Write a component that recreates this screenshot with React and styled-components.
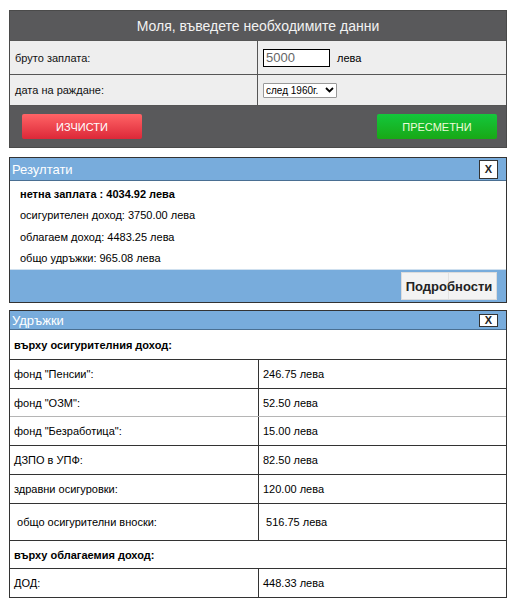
import React from 'react';
import styled, { createGlobalStyle } from 'styled-components';

const GlobalStyle = createGlobalStyle`
  body {
    margin: 0;
    background: #ffffff;
    font-family: "Liberation Sans", Arial, sans-serif;
    color: #000;
  }
`;

const Page = styled.div`
  width: 498px;
  padding: 10px 7px 0 9px;
  display: flex;
  flex-direction: column;
`;

const FormPanel = styled.div`
  background: #59595b;
  border: 1px solid #4a4a4a;
  box-sizing: border-box;
`;

const FormHeader = styled.div`
  height: 29px;
  display: flex;
  align-items: center;
  justify-content: center;
  color: #f2f2f2;
  font-size: 14px;
`;

const FieldRow = styled.div`
  display: grid;
  grid-template-columns: 247px 1fr;
  height: ${p => p.$height}px;
  background: #eeeeee;
  border-top: 1px solid #555;
  box-sizing: border-box;
`;

const FieldLabel = styled.div`
  display: flex;
  align-items: center;
  padding-left: 5px;
  font-size: 11px;
  color: #111;
`;

const FieldValue = styled.div`
  display: flex;
  align-items: center;
  gap: 7px;
  padding-left: 5px;
  border-left: 1px solid #555;
  font-size: 11px;
`;

const NumberInput = styled.input`
  width: 67px;
  height: 18px;
  box-sizing: border-box;
  border: 1px solid #000;
  padding: 0 2px;
  font-family: "Liberation Sans", Arial, sans-serif;
  font-size: 13px;
  color: #666;
  background: #fff;
  outline: none;
`;

const SelectWrap = styled.div`
  position: relative;
  display: flex;
`;

const Select = styled.select`
  appearance: none;
  width: 74px;
  height: 15px;
  box-sizing: border-box;
  border: 1px solid #999;
  border-radius: 1px;
  padding: 0 0 0 2px;
  font-family: "Liberation Sans", Arial, sans-serif;
  font-size: 10px;
  background: #fff;
  color: #000;
`;

const Chevron = styled.svg`
  position: absolute;
  right: 3px;
  top: 4px;
  pointer-events: none;
`;

const ButtonBar = styled.div`
  height: 42px;
  display: flex;
  justify-content: space-between;
  align-items: flex-start;
  padding: 8px 9px 0 12px;
  border-top: 1px solid #555;
  box-sizing: border-box;
`;

const ActionButton = styled.button`
  width: 120px;
  height: 25px;
  border: none;
  border-radius: 2px;
  font-family: "Liberation Sans", Arial, sans-serif;
  font-size: 11px;
  color: ${p => (p.$variant === 'green' ? '#eefbd8' : '#ffffff')};
  background: ${p =>
    p.$variant === 'green'
      ? 'linear-gradient(#14c73c, #18a816)'
      : 'linear-gradient(#ff6466, #dc2838)'};
  cursor: pointer;
`;

const Panel = styled.div`
  margin-top: ${p => p.$gap}px;
  border: 1px solid #333;
  box-sizing: border-box;
`;

const PanelHeader = styled.div`
  height: ${p => p.$height}px;
  background: #78acdc;
  display: flex;
  align-items: center;
  justify-content: space-between;
  padding: 0 8px 0 2px;
  color: #ffffff;
  font-size: 13px;
  border-bottom: 1px solid #4a6f92;
  box-sizing: border-box;
`;

const CloseButton = styled.button`
  width: 19px;
  height: ${p => p.$height}px;
  padding: 0;
  border: 1px solid #333;
  background: #fff;
  font-family: "Liberation Sans", Arial, sans-serif;
  font-size: 11px;
  font-weight: bold;
  color: #222;
  display: flex;
  align-items: center;
  justify-content: center;
  cursor: pointer;
`;

const ResultsBody = styled.div`
  background: #fff;
  height: 88px;
  padding: 2px 0 0 10px;
  box-sizing: border-box;
  display: flex;
  flex-direction: column;
`;

const ResultLine = styled.div`
  height: 21.5px;
  display: flex;
  align-items: center;
  font-size: 11px;
  font-weight: ${p => (p.$bold ? 'bold' : 'normal')};
`;

const PanelFooter = styled.div`
  height: 33px;
  background: #78acdc;
  border-top: 1px solid #cfe0ef;
  display: flex;
  justify-content: flex-end;
  align-items: center;
  padding-right: 9px;
  box-sizing: border-box;
`;

const DetailsButton = styled.button`
  width: 96px;
  height: 28px;
  border: 1px solid #dcdcdc;
  background: linear-gradient(90deg, #f3f3f3 0, #f3f3f3 46px, #e2e2e2 46px, #e2e2e2 47px, #f3f3f3 47px);
  font-family: "Liberation Sans", Arial, sans-serif;
  font-size: 13px;
  font-weight: bold;
  color: #222;
  padding: 0;
  cursor: pointer;
`;

const Table = styled.div`
  background: #fff;
  display: flex;
  flex-direction: column;
`;

const TableRow = styled.div`
  display: grid;
  grid-template-columns: ${p => (p.$section ? '1fr' : '248px 1fr')};
  height: ${p => p.$height || 29}px;
  border-top: ${p => (p.$first ? 'none' : `1px solid ${p.$lightTop ? '#b5b5b5' : '#333'}`)};
  box-sizing: border-box;
`;

const Cell = styled.div`
  display: flex;
  align-items: center;
  padding-left: 4px;
  font-size: 11px;
  font-weight: ${p => (p.$bold ? 'bold' : 'normal')};
  white-space: pre;
  & + & {
    border-left: 1px solid #333;
  }
`;

const deductions = [
  ['фонд "Пенсии":', '246.75 лева'],
  ['фонд "ОЗМ":', '52.50 лева', { height: 28 }],
  ['фонд "Безработица":', '15.00 лева', { lightTop: true }],
  ['ДЗПО в УПФ:', '82.50 лева'],
  ['здравни осигуровки:', '120.00 лева'],
  [' общо осигурителни вноски:', ' 516.75 лева', { height: 37 }],
];

export default function App() {
  return (
    <>
      <GlobalStyle />
      <Page>
        <FormPanel>
          <FormHeader>Моля, въведете необходимите данни</FormHeader>
          <FieldRow $height={34}>
            <FieldLabel>бруто заплата:</FieldLabel>
            <FieldValue>
              <NumberInput defaultValue="5000" />
              <span>лева</span>
            </FieldValue>
          </FieldRow>
          <FieldRow $height={31}>
            <FieldLabel>дата на раждане:</FieldLabel>
            <FieldValue>
              <SelectWrap>
                <Select defaultValue="after">
                  <option value="before">преди 1960г.</option>
                  <option value="after">след 1960г.</option>
                </Select>
                <Chevron width="9" height="6" viewBox="0 0 9 6">
                  <path d="M1 1l3.5 3.5L8 1" fill="none" stroke="#000" strokeWidth="1.8" />
                </Chevron>
              </SelectWrap>
            </FieldValue>
          </FieldRow>
          <ButtonBar>
            <ActionButton $variant="red">ИЗЧИСТИ</ActionButton>
            <ActionButton $variant="green">ПРЕСМЕТНИ</ActionButton>
          </ButtonBar>
        </FormPanel>

        <Panel $gap={9}>
          <PanelHeader $height={23}>
            <span>Резултати</span>
            <CloseButton $height={19}>X</CloseButton>
          </PanelHeader>
          <ResultsBody>
            <ResultLine $bold>нетна заплата : 4034.92 лева</ResultLine>
            <ResultLine>осигурителен доход: 3750.00 лева</ResultLine>
            <ResultLine>облагаем доход: 4483.25 лева</ResultLine>
            <ResultLine>общо удръжки: 965.08 лева</ResultLine>
          </ResultsBody>
          <PanelFooter>
            <DetailsButton>Подробности</DetailsButton>
          </PanelFooter>
        </Panel>

        <Panel $gap={7}>
          <PanelHeader $height={19}>
            <span>Удръжки</span>
            <CloseButton $height={13}>X</CloseButton>
          </PanelHeader>
          <Table>
            <TableRow $section $first>
              <Cell $bold>върху осигурителния доход:</Cell>
            </TableRow>
            {deductions.map(([label, value, opts = {}]) => (
              <TableRow key={label} $height={opts.height} $lightTop={opts.lightTop}>
                <Cell>{label}</Cell>
                <Cell>{value}</Cell>
              </TableRow>
            ))}
            <TableRow $section $height={28}>
              <Cell $bold>върху облагаемия доход:</Cell>
            </TableRow>
            <TableRow>
              <Cell>ДОД:</Cell>
              <Cell>448.33 лева</Cell>
            </TableRow>
          </Table>
        </Panel>
      </Page>
    </>
  );
}
